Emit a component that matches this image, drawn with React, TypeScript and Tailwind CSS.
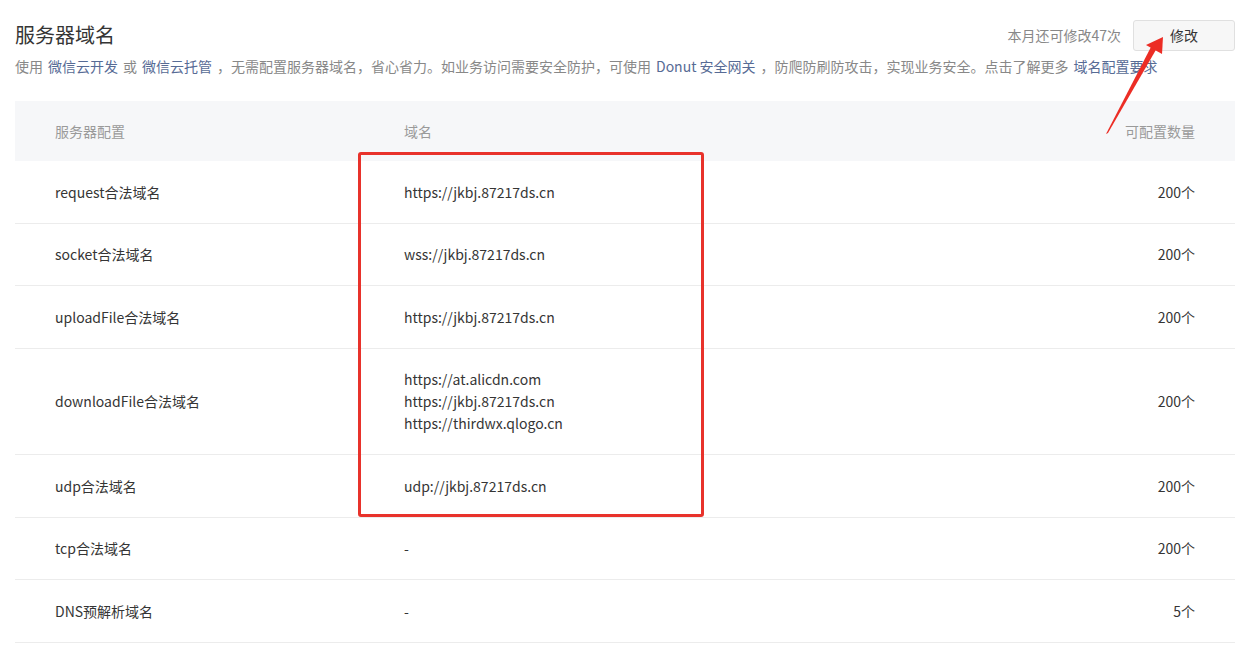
import React from "react";

const FONT = "font-['Microsoft_YaHei','Noto_Sans_CJK_SC','Noto_Sans',sans-serif]";

type Row = { name: string; domains: string[]; quota: string };

const ROWS: Row[] = [
  { name: "request合法域名", domains: ["https://jkbj.87217ds.cn"], quota: "200个" },
  { name: "socket合法域名", domains: ["wss://jkbj.87217ds.cn"], quota: "200个" },
  { name: "uploadFile合法域名", domains: ["https://jkbj.87217ds.cn"], quota: "200个" },
  {
    name: "downloadFile合法域名",
    domains: ["https://at.alicdn.com", "https://jkbj.87217ds.cn", "https://thirdwx.qlogo.cn"],
    quota: "200个",
  },
  { name: "udp合法域名", domains: ["udp://jkbj.87217ds.cn"], quota: "200个" },
  { name: "tcp合法域名", domains: ["-"], quota: "200个" },
  { name: "DNS预解析域名", domains: ["-"], quota: "5个" },
];

function Link({ children }: { children: React.ReactNode }) {
  return <span className="text-[#576b95] mx-[5px]">{children}</span>;
}

export default function App() {
  return (
    <div className={`relative min-h-[646px] bg-white pl-[15px] pr-[22px] pt-[20px] text-[#353535] ${FONT}`}>
      {/* header */}
      <div className="flex items-start justify-between">
        <h2 className="text-[20px] leading-[30px] font-normal">服务器域名</h2>
        <div className="flex items-center gap-[12px]">
          <span className="text-[14px] text-[#888]">本月还可修改47次</span>
          <button className="w-[102px] h-[31px] rounded-[3px] border border-[#e0e0e0] bg-[#f7f7f7] text-[14px] text-[#353535]">
            修改
          </button>
        </div>
      </div>
      <p className="mt-[4px] text-[14px] leading-[22px] text-[#888]">
        使用<Link>微信云开发</Link>或<Link>微信云托管</Link>，无需配置服务器域名，省心省力。如业务访问需要安全防护，可使用
        <Link>Donut 安全网关</Link>，防爬防刷防攻击，实现业务安全。点击了解更多<Link>域名配置要求</Link>
      </p>

      {/* table */}
      <div className="mt-[24px] text-[14px] leading-[22px]">
        <div className="flex h-[60px] items-center bg-[#f6f7f9] text-[#9a9a9a]">
          <div className="w-[349px] pl-[40px]">服务器配置</div>
          <div className="flex-1 pl-[40px]">域名</div>
          <div className="w-[200px] pr-[40px] text-right">可配置数量</div>
        </div>
        {ROWS.map((r) => (
          <div
            key={r.name}
            className="flex items-center border-b border-[#ececec] py-[19.75px]"
          >
            <div className="w-[349px] pl-[40px]">{r.name}</div>
            <div className="flex-1 pl-[40px]">
              {r.domains.map((d) => (
                <div key={d}>{d}</div>
              ))}
            </div>
            <div className="w-[200px] pr-[40px] text-right">{r.quota}</div>
          </div>
        ))}
      </div>

      {/* annotation: red box */}
      <div className="pointer-events-none absolute left-[358px] top-[152px] h-[365px] w-[346px] rounded-[3px] border-[3px] border-[#e8322b]" />

      {/* annotation: arrow */}
      <svg
        className="pointer-events-none absolute left-0 top-0"
        width="1257"
        height="646"
        viewBox="0 0 1257 646"
      >
        <polygon points="1106,134 1108,133 1157,48 1152,45" fill="#ec2d25" />
        <polygon points="1163,37 1146,45 1162,54" fill="#ec2d25" />
      </svg>
    </div>
  );
}
